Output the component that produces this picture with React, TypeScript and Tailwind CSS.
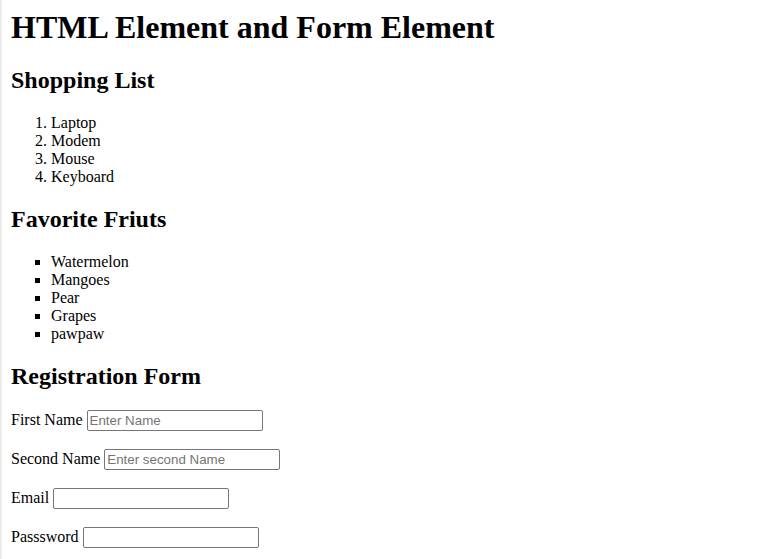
import React from 'react'

const shopping = ['Laptop', 'Modem', 'Mouse', 'Keyboard']
const fruits = ['Watermelon', 'Mangoes', 'Pear', 'Grapes', 'pawpaw']

const fields = [
  { label: 'First Name', type: 'text', placeholder: 'Enter Name' },
  { label: 'Second Name', type: 'text', placeholder: 'Enter second Name' },
  { label: 'Email', type: 'email', placeholder: '' },
  { label: 'Passsword', type: 'password', placeholder: '' },
]

export default function App() {
  return (
    <div className="min-h-screen flex bg-white text-black font-['Liberation_Serif','Times_New_Roman',serif] text-[16px] leading-[normal]">
      {/* left edge strip */}
      <div className="w-[2px] shrink-0 bg-[#ededed]" />
      <div className="flex-1 pl-[9px] pt-[9px] pr-2">
        <h1 className="text-[32px] font-bold mt-0 mb-[21.44px]">HTML Element and Form Element</h1>

        <h2 className="text-[24px] font-bold my-[19.92px]">Shopping List</h2>
        <ol className="list-decimal pl-10 my-4">
          {shopping.map(item => (
            <li key={item}>{item}</li>
          ))}
        </ol>

        <h2 className="text-[24px] font-bold my-[19.92px]">Favorite Friuts</h2>
        <ul className="list-[square] pl-10 my-4">
          {fruits.map(item => (
            <li key={item}>{item}</li>
          ))}
        </ul>

        <h2 className="text-[24px] font-bold my-[19.92px]">Registration Form</h2>
        <form>
          {fields.map(f => (
            <React.Fragment key={f.label}>
              <label>{f.label}</label>{' '}
              <input
                type={f.type}
                placeholder={f.placeholder}
                className="w-[176px] h-[21px] box-border border border-[#767676] rounded-[2px] px-[2px] py-[1px] font-['Liberation_Sans',Arial,sans-serif] text-[13.333px] leading-[normal] align-baseline placeholder:text-[#757575] bg-white"
              />
              <br />
              <br />
            </React.Fragment>
          ))}
        </form>
      </div>
    </div>
  )
}
